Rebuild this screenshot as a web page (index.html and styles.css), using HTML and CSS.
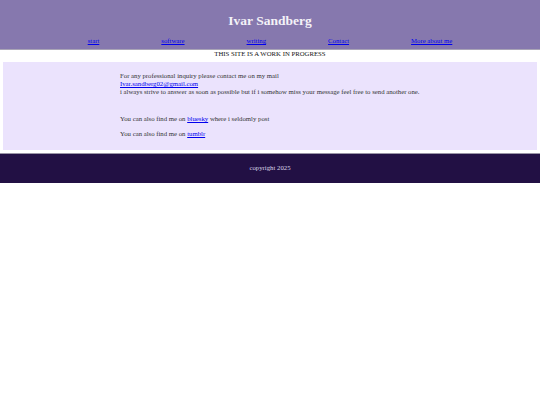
FILE: index.html
```html
<!DOCTYPE html>
<html lang="en">
<head>
<meta charset="utf-8">
<title>Ivar Sandberg</title>
<link rel="stylesheet" href="styles.css">
</head>
<body>
<header class="site-header">
  <h1 class="site-title">Ivar Sandberg</h1>
  <nav class="site-nav">
    <a href="#">start</a>
    <a href="#">software</a>
    <a href="#">writing</a>
    <a href="#">Contact</a>
    <a href="#">More about me</a>
  </nav>
</header>
<p class="notice">THIS SITE IS A WORK IN PROGRESS</p>
<main class="content">
  <p class="first">For any professional inquiry please contact me on my mail<br>
  <a href="#">Ivar.sandberg02@gmail.com</a><br>
  i always strive to answer as soon as possible but if i somehow miss your message feel free to send another one.</p>
  <p class="social">You can also find me on <a href="#">bluesky</a> where i seldomly post</p>
  <p class="social">You can also find me on <a href="#">tumblr</a></p>
</main>
<footer class="site-footer">
  <p>copyright 2025</p>
</footer>
</body>
</html>
```

FILE: styles.css
```css
html, body {
  margin: 0;
  padding: 0;
  background: #ffffff;
}
body {
  font-family: "Liberation Serif", "Times New Roman", serif;
  font-size: 6.75px;
  color: #222222;
}
a {
  color: #0000ee;
}
.site-header {
  background: #8678ae;
  padding: 13px 0 5px;
  border-bottom: 1px solid #a9a4b6;
}
.site-title {
  margin: 0 0 8px;
  font-size: 13.5px;
  text-align: center;
  color: #f4f2f8;
  font-weight: bold;
}
.site-nav {
  display: flex;
  justify-content: center;
  gap: 62px;
}
.notice {
  margin: 0;
  text-align: center;
  color: #111111;
  line-height: 8px;
}
.content {
  margin: 4px 3px 0;
  background: #ebe3fd;
  padding: 10px 10px 5px 117px;
  color: #333333;
}
.content p {
  margin: 0 0 7px;
  line-height: 8px;
}
.content .first {
  margin-bottom: 19px;
}
.site-footer {
  margin-top: 3px;
  border-top: 1px solid #9a95a6;
  background: #221044;
  height: 30px;
  box-sizing: border-box;
  padding-top: 10px;
  text-align: center;
  color: #dcd6ea;
}
.site-footer p {
  margin: 0;
  line-height: 8px;
}
```
